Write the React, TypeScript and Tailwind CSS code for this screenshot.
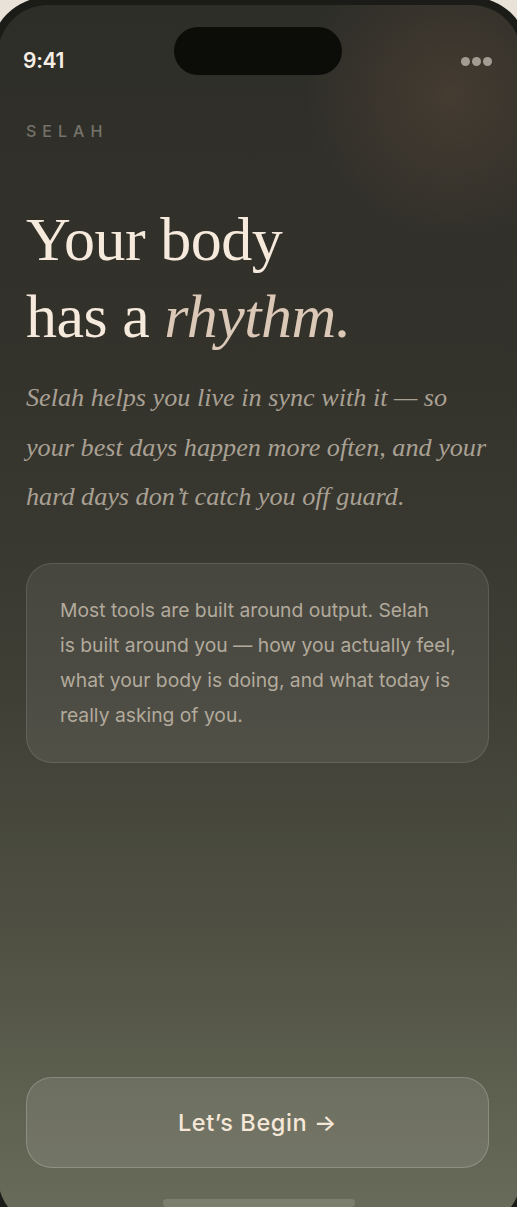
export default function App() {
  const serif = { fontFamily: '"Liberation Serif", "DejaVu Serif", serif' };
  const sans = { fontFamily: 'Inter, "Noto Sans", sans-serif' };

  return (
    <div className="h-[1207px] w-[517px] overflow-hidden bg-[#e9e2d8]">
      <div className="-ml-[10px] -mt-[3px] w-[539px] rounded-[58px] bg-[#1b1b17] p-[8px]">
        <div className="relative flex h-[1222px] flex-col overflow-hidden rounded-[50px] bg-[linear-gradient(180deg,#2e2e28_0%,#33322b_30%,#3e3e35_55%,#515244_78%,#6a6d5b_100%)]">
          {/* warm glow */}
          <div className="pointer-events-none absolute -right-[90px] -top-[70px] h-[320px] w-[320px] rounded-full bg-[radial-gradient(circle,rgba(90,72,58,0.5)_0%,rgba(90,72,58,0)_65%)]" />

          {/* status bar */}
          <div className="relative grid h-[118px] grid-cols-[1fr_168px_1fr] items-start pl-[25px] pr-[29px] pt-[22px]">
            <span style={sans} className="mt-[20px] text-[21px] font-semibold leading-[28px] tracking-[-0.3px] text-[#f6ede4]">
              9:41
            </span>
            <div className="h-[48px] w-[168px] rounded-full bg-[#0c0c08]" />
            <div className="mt-[30px] flex justify-end gap-[2px]">
              <span className="h-[9px] w-[9px] rounded-full bg-[#a39c92]" />
              <span className="h-[9px] w-[9px] rounded-full bg-[#a39c92]" />
              <span className="h-[9px] w-[9px] rounded-full bg-[#a39c92]" />
            </div>
          </div>

          <div className="relative flex flex-1 flex-col pl-[28px] pr-[30px]">
            <div style={sans} className="mt-[-4px] text-[16px] font-medium leading-[24px] tracking-[6px] text-[#75726a]">
              SELAH
            </div>

            <h1 style={serif} className="mt-[58px] text-[62px] font-normal leading-[77px] tracking-[-0.5px] text-[#f6eadd]">
              <span className="block">Your body</span>
              <span className="block">
                has a <em className="italic text-[#dcc8b7]">rhythm.</em>
              </span>
            </h1>

            <p style={serif} className="mt-[18px] text-[26.2px] italic leading-[49.5px] text-[#a9a094]">
              <span className="block whitespace-nowrap">Selah helps you live in sync with it — so</span>
              <span className="block whitespace-nowrap">your best days happen more often, and your</span>
              <span className="block whitespace-nowrap">hard days don’t catch you off guard.</span>
            </p>

            <div className="mt-[41px] w-[463px] rounded-[26px] border border-[rgba(255,255,255,0.11)] bg-[rgba(255,255,255,0.07)] pb-[29px] pl-[33px] pr-[10px] pt-[29px]">
              <p style={sans} className="text-[19.3px] leading-[35px] text-[#b3aa9c]">
                <span className="block whitespace-nowrap">Most tools are built around output. Selah</span>
                <span className="block whitespace-nowrap">is built around you — how you actually feel,</span>
                <span className="block whitespace-nowrap">what your body is doing, and what today is</span>
                <span className="block whitespace-nowrap">really asking of you.</span>
              </p>
            </div>

            <div className="flex-1" />

            <button
              style={sans}
              className="flex h-[91px] w-[463px] items-center justify-center rounded-[26px] border border-[rgba(255,255,255,0.2)] bg-[rgba(255,255,255,0.1)] text-[23.5px] font-medium tracking-[0.6px] text-[#f6e8d9]"
            >
              Let’s Begin →
            </button>

            <div className="mb-[20px] mt-[31px] flex justify-center">
              <div className="h-[8px] w-[192px] rounded-full bg-[#7c7f6d]" />
            </div>
          </div>
        </div>
      </div>
    </div>
  );
}
